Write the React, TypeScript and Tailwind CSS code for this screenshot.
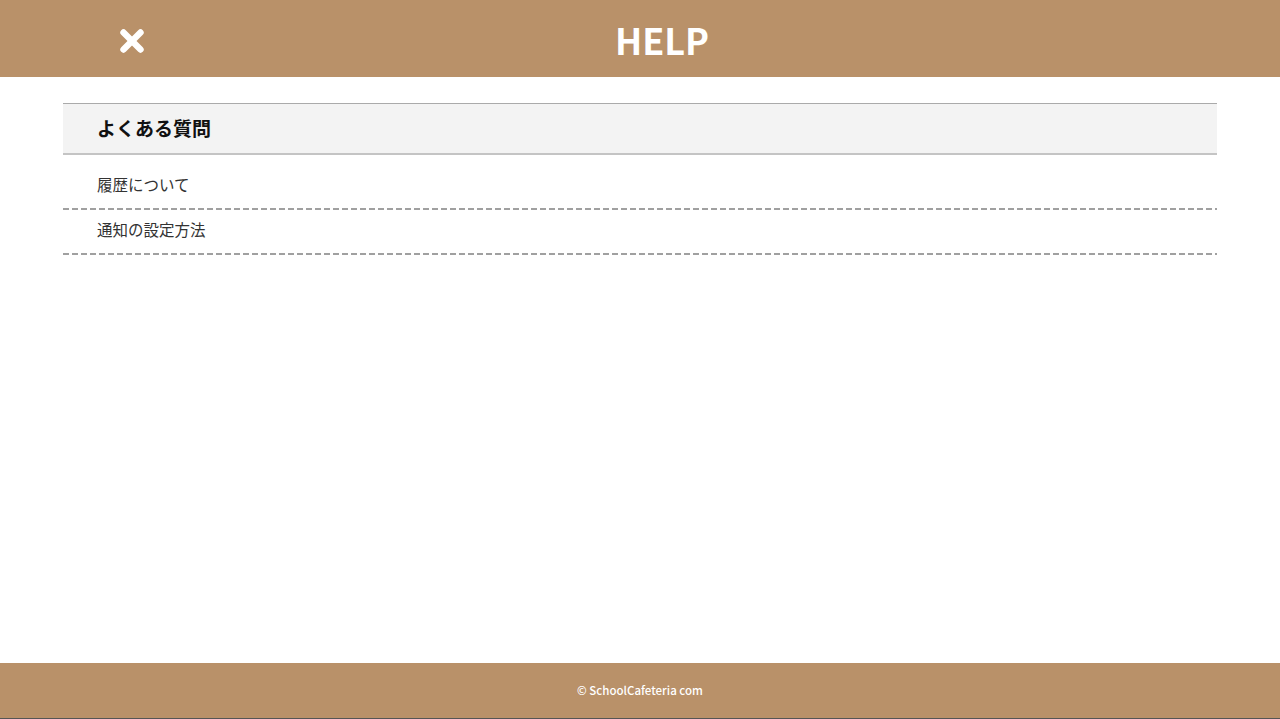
import { X } from "lucide-react";

const faqItems = ["履歴について", "通知の設定方法"];

function App() {
    return (
        <div className="h-[719px] flex flex-col bg-white font-['Noto_Sans_CJK_JP',sans-serif]">
            <header className="h-[77px] shrink-0 bg-[#b99169] flex items-center">
                <button
                    type="button"
                    className="w-[176px] h-full flex items-center justify-center pl-[88px] pt-[5px] text-white"
                >
                    <X size={34} strokeWidth={4.5} />
                </button>
                <h1 className="flex-1 pr-[132px] text-center text-white text-[36px] font-semibold leading-none">
                    HELP
                </h1>
            </header>

            <main className="flex-1 px-[63px] mt-[26px]">
                <div className="border-t border-[#aaaaaa] border-b-2 border-b-[#c4c4c4] bg-[#f3f3f3] h-[52px] flex items-center pl-[34px]">
                    <h2 className="text-[19px] font-bold text-[#111]">
                        よくある質問
                    </h2>
                </div>
                <ul className="pt-[10px]">
                    {faqItems.map((item) => (
                        <li key={item} className="flex flex-col">
                            <a className="h-[43px] flex items-center pl-[34px] pb-[3px] text-[15.5px] text-[#333] cursor-pointer">
                                {item}
                            </a>
                            <div className="h-[2px] bg-[repeating-linear-gradient(to_right,#a0a0a0_0_6px,transparent_6px_9px)]"></div>
                        </li>
                    ))}
                </ul>
            </main>

            <footer className="h-[56px] shrink-0 bg-[#b99169] border-b border-[#555] flex items-center justify-center">
                <p className="text-white text-[11.5px] font-medium">
                    © SchoolCafeteria com
                </p>
            </footer>
        </div>
    );
}

export default App;
